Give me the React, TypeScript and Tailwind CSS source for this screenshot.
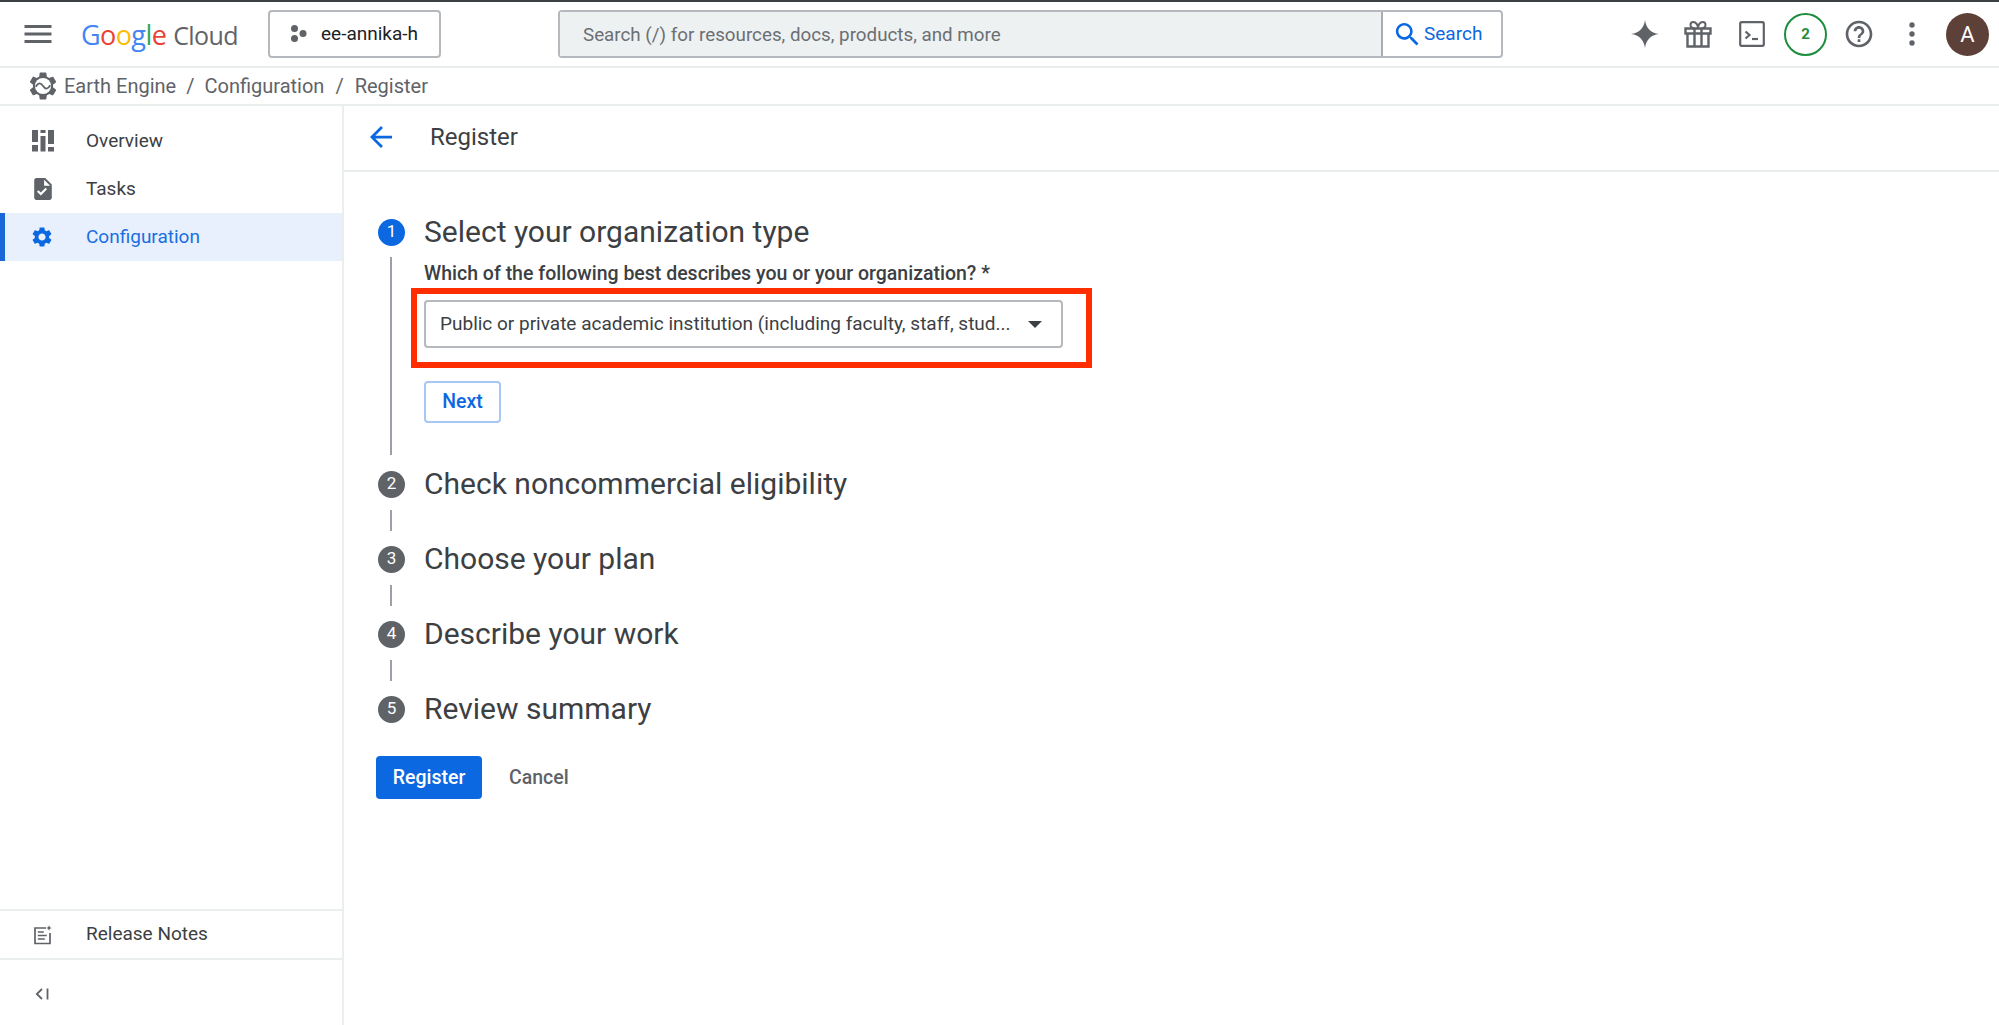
const font = { fontFamily: 'Roboto, "Liberation Sans", sans-serif' }

const gearPath =
  'M19.14 12.94c.04-.3.06-.61.06-.94 0-.32-.02-.64-.07-.94l2.03-1.58c.18-.14.23-.41.12-.61l-1.92-3.32c-.12-.22-.37-.29-.59-.22l-2.39.96c-.5-.38-1.03-.7-1.62-.94l-.36-2.54c-.04-.24-.24-.41-.48-.41h-3.84c-.24 0-.43.17-.47.41l-.36 2.54c-.59.24-1.13.57-1.62.94l-2.39-.96c-.22-.08-.47 0-.59.22L2.74 8.87c-.12.21-.08.47.12.61l2.03 1.58c-.05.3-.09.63-.09.94s.02.64.07.94l-2.03 1.58c-.18.14-.23.41-.12.61l1.92 3.32c.12.22.37.29.59.22l2.39-.96c.5.38 1.03.7 1.62.94l.36 2.54c.05.24.24.41.48.41h3.84c.24 0 .44-.17.47-.41l.36-2.54c.59-.24 1.13-.56 1.62-.94l2.39.96c.22.08.47 0 .59-.22l1.92-3.32c.12-.22.07-.47-.12-.61l-2.01-1.58zM12 15.6c-1.98 0-3.6-1.62-3.6-3.6s1.62-3.6 3.6-3.6 3.6 1.62 3.6 3.6-1.62 3.6-3.6 3.6z'

function MenuIcon() {
  return (
    <svg viewBox="0 0 24 24" className="h-[36px] w-[36px] fill-[#5f6368]">
      <path d="M3 18h18v-2H3v2zm0-5h18v-2H3v2zm0-7v2h18V6H3z" />
    </svg>
  )
}

function ProjectIcon() {
  return (
    <svg viewBox="0 0 20 20" className="h-[20px] w-[20px] fill-[#5f6368]">
      <circle cx="6.5" cy="4.5" r="3.5" />
      <circle cx="6.5" cy="14.5" r="3.5" />
      <circle cx="15" cy="9.5" r="3.5" />
    </svg>
  )
}

function SearchIcon() {
  return (
    <svg viewBox="0 0 24 24" className="h-[31px] w-[31px] fill-[#0b68e1]">
      <path d="M15.5 14h-.79l-.28-.27C15.41 12.59 16 11.11 16 9.5 16 5.91 13.09 3 9.5 3S3 5.91 3 9.5 5.91 16 9.5 16c1.61 0 3.09-.59 4.23-1.57l.27.28v.79l5 4.99L20.49 19l-4.99-5zm-6 0C7.01 14 5 11.99 5 9.5S7.01 5 9.5 5 14 7.01 14 9.5 11.99 14 9.5 14z" />
    </svg>
  )
}

function SparkIcon() {
  return (
    <svg viewBox="0 0 28 28" className="h-[28px] w-[28px] fill-[#5f6368]">
      <path d="M14 0c.9 7.6 5.6 13 14 14-8.4 1-13.1 6.400-14 14-.9-7.600-5.600-13-14-14C8.400 13 13.100 7.600 14 0z" />
    </svg>
  )
}

function GiftIcon() {
  return (
    <svg viewBox="0 0 28 28" className="h-[28px] w-[28px] fill-none stroke-[#5f6368] stroke-[2.4]">
      <path d="M1.500 8.500h25v5h-25zM3.500 13.500v13h21v-13M10.500 8.500v18M17.500 8.500v18" />
      <path d="M10.500 8.500c-3-.5-4-2-4-3.500 0-1.500 1-3 2.800-3 2.700 0 4.700 3 4.700 6.500M17.500 8.500c3-.5 4-2 4-3.500 0-1.500-1-3-2.800-3-2.700 0-4.700 3-4.700 6.500" strokeWidth="2" />
    </svg>
  )
}

function TerminalIcon() {
  return (
    <svg viewBox="0 0 26 26" className="h-[26px] w-[26px] fill-none stroke-[#5f6368]">
      <rect x="1.200" y="1.200" width="23.600" height="23.600" rx="1.500" strokeWidth="2.200" />
      <path d="M6.500 10.500l4 3.500-4 3.500" strokeWidth="2.200" />
      <path d="M13 18h6" strokeWidth="2.200" />
    </svg>
  )
}

function HelpIcon() {
  return (
    <svg viewBox="0 0 24 24" className="h-[32px] w-[32px] fill-[#5f6368]">
      <path d="M11 18h2v-2h-2v2zm1-16C6.480 2 2 6.480 2 12s4.480 10 10 10 10-4.480 10-10S17.520 2 12 2zm0 18c-4.410 0-8-3.590-8-8s3.590-8 8-8 8 3.590 8 8-3.590 8-8 8zm0-14c-2.210 0-4 1.790-4 4h2c0-1.100.900-2 2-2s2 .900 2 2c0 2-3 1.750-3 5h2c0-2.250 3-2.500 3-5 0-2.210-1.790-4-4-4z" />
    </svg>
  )
}

function DotsIcon() {
  return (
    <svg viewBox="0 0 6 24" className="h-[24px] w-[6px] fill-[#5f6368]">
      <circle cx="3" cy="3" r="2.700" />
      <circle cx="3" cy="12" r="2.700" />
      <circle cx="3" cy="21" r="2.700" />
    </svg>
  )
}

function EarthEngineIcon() {
  return (
    <svg viewBox="2 2 20 20" className="h-[28px] w-[28px]">
      <path fill="#5f6368" d="M19.140 12.940c.040-.300.060-.610.060-.940 0-.320-.020-.640-.070-.940l2.030-1.580c.180-.140.230-.410.120-.610l-1.920-3.320c-.120-.220-.370-.290-.590-.220l-2.390.960c-.500-.380-1.030-.700-1.620-.940l-.360-2.540c-.040-.240-.240-.410-.480-.410h-3.840c-.240 0-.430.170-.470.410l-.360 2.540c-.590.240-1.130.570-1.620.940l-2.390-.960c-.220-.080-.470 0-.590.220L2.740 8.870c-.120.210-.080.470.120.610l2.030 1.580c-.050.300-.090.630-.090.940s.020.640.070.940l-2.030 1.580c-.180.140-.230.410-.120.610l1.920 3.320c.120.220.370.290.590.220l2.390-.960c.500.380 1.030.700 1.620.940l.360 2.540c.050.240.240.410.480.410h3.840c.240 0 .440-.170.470-.410l.360-2.540c.590-.240 1.130-.560 1.620-.940l2.390.960c.220.080.470 0 .590-.220l1.920-3.320c.120-.220.070-.470-.120-.610l-2.010-1.580z" />
      <circle cx="12" cy="12" r="5.800" fill="#fff" />
      <path d="M6.800 12.500c1.800-3 3.500-3 5.200-.500s3.400 2.500 5.200-.500" fill="none" stroke="#5f6368" strokeWidth="1.300" />
    </svg>
  )
}

function OverviewIcon() {
  return (
    <svg viewBox="0 0 22 22" className="h-[22px] w-[22px] fill-[#5f6368]">
      <rect x="0" y="0" width="6" height="12" />
      <rect x="0" y="15" width="6" height="6.500" />
      <rect x="8.500" y="0" width="5" height="3" />
      <rect x="8.500" y="6" width="5" height="15.500" />
      <rect x="16" y="0" width="6" height="14" />
      <rect x="16" y="17" width="6" height="4.500" />
    </svg>
  )
}

function TaskIcon() {
  return (
    <svg viewBox="4 2 16 20" className="h-[22px] w-[18px] fill-[#5f6368]">
      <path d="M14 2H6c-1.100 0-1.990.900-1.990 2L4 20c0 1.100.890 2 1.990 2H18c1.100 0 2-.900 2-2V8l-6-6zm-3.940 16L6.500 14.460l1.410-1.410 2.120 2.120 4.240-4.240 1.410 1.410L10.060 18zM13 9V3.500L18.500 9H13z" />
    </svg>
  )
}

function GearIcon() {
  return (
    <svg viewBox="0 0 24 24" className="h-[24px] w-[24px] fill-[#0b68e1]">
      <path d={gearPath} />
    </svg>
  )
}

function NotesIcon() {
  return (
    <svg viewBox="0 0 20 20" className="h-[20px] w-[20px] fill-none stroke-[#5f6368]">
      <path d="M13 3H2v15.500h15V8" strokeWidth="1.700" />
      <path d="M4.800 7h6M4.800 10.500h9M4.800 14h7" strokeWidth="1.500" />
      <path d="M16 0c.2 1.800 1.200 2.800 3 3-1.800.200-2.800 1.200-3 3-.200-1.800-1.200-2.800-3-3 1.800-.200 2.800-1.200 3-3z" fill="#5f6368" stroke="none" />
    </svg>
  )
}

function CollapseIcon() {
  return (
    <svg viewBox="0 0 14 12" className="h-[12px] w-[14px] fill-none stroke-[#5f6368] stroke-[1.800]">
      <path d="M7 1L1.800 6 7 11" />
      <path d="M12.500 0.500v11" />
    </svg>
  )
}

function BackIcon() {
  return (
    <svg viewBox="4 4 16 16" className="h-[22px] w-[22px] fill-[#0b68e1]">
      <path d="M20 11H7.830l5.590-5.590L12 4l-8 8 8 8 1.410-1.410L7.830 13H20v-2z" />
    </svg>
  )
}

function Header() {
  return (
    <header className="flex h-[68px] items-center border-t-2 border-b-2 border-t-[#3c4043] border-b-[#ebeeef] bg-white">
      <div className="ml-[20px] flex w-[36px] justify-center">
        <MenuIcon />
      </div>
      <div className="ml-[25px] flex w-[157px] items-baseline whitespace-nowrap leading-none" style={{ fontFamily: '"Open Sans", sans-serif' }}>
        <span className="text-[27px] tracking-[-0.6px]">
          <span className="text-[#4285f4]">G</span>
          <span className="text-[#ea4335]">o</span>
          <span className="text-[#fbbc04]">o</span>
          <span className="text-[#4285f4]">g</span>
          <span className="text-[#34a853]">l</span>
          <span className="text-[#ea4335]">e</span>
        </span>
        <span className="ml-[7px] text-[25px] tracking-[-0.6px] text-[#5f6368]">Cloud</span>
      </div>
      <div className="ml-[30px] flex h-[48px] w-[173px] items-center rounded-[4px] border-2 border-[#b5b9bd] pl-[18px]">
        <ProjectIcon />
        <span className="ml-[13px] text-[19px] text-[#202124]">ee-annika-h</span>
      </div>
      <div className="ml-[117px] flex h-[48px] w-[945px] rounded-[4px] border-2 border-[#b5b9bd]">
        <div className="flex w-[823px] items-center border-r-2 border-[#a9adb1] bg-[#eef1f2] pl-[23px] pt-[2px] text-[18.800px] text-[#6b6f73]">
          Search (/) for resources, docs, products, and more
        </div>
        <div className="flex flex-1 items-center pl-[9px] text-[19px] text-[#0b68e1]">
          <SearchIcon />
          <span className="ml-[1px]">Search</span>
        </div>
      </div>
      <div className="ml-[128px] flex w-[28px] justify-center"><SparkIcon /></div>
      <div className="ml-[25px] flex w-[28px] justify-center"><GiftIcon /></div>
      <div className="ml-[27px] flex w-[26px] justify-center"><TerminalIcon /></div>
      <div className="ml-[19px] flex h-[43px] w-[43px] items-center justify-center rounded-full border-[2.500px] border-[#1e8e3e] text-[15px] font-bold text-[#1e8e3e]">
        2
      </div>
      <div className="ml-[16px] flex w-[32px] justify-center"><HelpIcon /></div>
      <div className="ml-[34px] flex w-[6px] justify-center"><DotsIcon /></div>
      <div className="ml-[31px] flex h-[43px] w-[43px] items-center justify-center rounded-full bg-[#5d4037] text-[22px] text-white">
        A
      </div>
    </header>
  )
}

function Breadcrumb() {
  return (
    <div className="flex h-[38px] items-center border-b-2 border-[#ebeeef] pl-[29px] text-[20px] text-[#5f6368]">
      <EarthEngineIcon />
      <span className="ml-[7px]">Earth Engine</span>
      <span className="mx-[10px]">/</span>
      <span>Configuration</span>
      <span className="mx-[11px]">/</span>
      <span>Register</span>
    </div>
  )
}

function Sidebar() {
  return (
    <aside className="flex w-[344px] shrink-0 flex-col border-r-2 border-[#ebeeef] pt-[11px]">
      <div className="flex h-[48px] items-center text-[19px] text-[#3c4043]">
        <div className="flex w-[86px] justify-center"><OverviewIcon /></div>
        <span>Overview</span>
      </div>
      <div className="flex h-[48px] items-center text-[19px] text-[#3c4043]">
        <div className="flex w-[86px] justify-center"><TaskIcon /></div>
        <span>Tasks</span>
      </div>
      <div className="flex h-[48px] items-center border-l-[5px] border-[#1a66d6] bg-[#e8f0fe] text-[19px] text-[#1a6fe0]">
        <div className="flex w-[74px] justify-center"><GearIcon /></div>
        <span className="ml-[7px]">Configuration</span>
      </div>
      <div className="mt-auto flex h-[49px] items-center border-t-2 border-[#ebeeef] text-[19px] text-[#3c4043]">
        <div className="flex w-[86px] justify-center"><NotesIcon /></div>
        <span>Release Notes</span>
      </div>
      <div className="flex h-[67px] items-center border-t-2 border-[#ebeeef] pt-[3px]">
        <div className="flex w-[84px] justify-center"><CollapseIcon /></div>
      </div>
    </aside>
  )
}

function StepRow({ n, title, active }: { n: number; title: string; active?: boolean }) {
  return (
    <div className="flex h-[50px] items-center">
      <div className={`flex h-[27px] w-[27px] items-center justify-center rounded-full text-[17px] text-white ${active ? 'bg-[#0b68e1]' : 'bg-[#5f6368]'}`}>
        {n}
      </div>
      <div className="ml-[19px] pb-[2px] text-[30px] text-[#3c4043]">{title}</div>
    </div>
  )
}

function Connector() {
  return (
    <div className="h-[25px] pt-[1px]">
      <div className="ml-[12px] h-[21px] w-[2px] bg-[#9aa0a6]" />
    </div>
  )
}

function Main() {
  return (
    <main className="flex-1">
      <div className="flex h-[66px] items-center border-b-2 border-[#ebeeef] pb-[2px] pl-[26px]">
        <BackIcon />
        <span className="ml-[38px] text-[24px] text-[#3c4043]">Register</span>
      </div>
      <div className="pl-[34px] pt-[35px]">
        <StepRow n={1} title="Select your organization type" active />
        <div className="mb-[4px] flex h-[198px]">
          <div className="ml-[12px] w-[2px] bg-[#9aa0a6]" />
          <div className="pl-[32px] pt-[7px]">
            <div className="whitespace-nowrap text-[19.500px] font-medium leading-[20px] text-[#3c4043]">
              Which of the following best describes you or your organization? *
            </div>
            <div className="ml-[-13px] mt-[4px] h-[80px] w-[681px] border-[6px] border-[#ff2d00] pl-[7px] pt-[6px]">
              <div className="flex h-[48px] w-[639px] items-center justify-between rounded-[4px] border-2 border-[#b5b9bd] pl-[14px] pr-[19px] text-[19px] text-[#3c4043]">
                <span className="whitespace-nowrap pt-[1px]">Public or private academic institution (including faculty, staff, stud...</span>
                <div className="h-0 w-0 border-x-[7px] border-t-[7px] border-x-transparent border-t-[#3c4043]" />
              </div>
            </div>
            <div className="mt-[13px] flex h-[42px] w-[77px] items-center justify-center rounded-[4px] border-2 border-[#a8c7f5] text-[19.500px] font-medium text-[#0b68e1]">
              Next
            </div>
          </div>
        </div>
        <StepRow n={2} title="Check noncommercial eligibility" />
        <Connector />
        <StepRow n={3} title="Choose your plan" />
        <Connector />
        <StepRow n={4} title="Describe your work" />
        <Connector />
        <StepRow n={5} title="Review summary" />
        <div className="ml-[-2px] mt-[22px] flex items-center">
          <div className="flex h-[43px] w-[106px] items-center justify-center rounded-[4px] bg-[#0b68e1] text-[19.500px] font-medium text-white">
            Register
          </div>
          <div className="ml-[27px] pt-[1px] text-[19.500px] font-medium text-[#5f6368]">Cancel</div>
        </div>
      </div>
    </main>
  )
}

export default function App() {
  return (
    <div className="flex h-[1025px] flex-col overflow-hidden bg-white" style={font}>
      <Header />
      <Breadcrumb />
      <div className="flex flex-1">
        <Sidebar />
        <Main />
      </div>
    </div>
  )
}
